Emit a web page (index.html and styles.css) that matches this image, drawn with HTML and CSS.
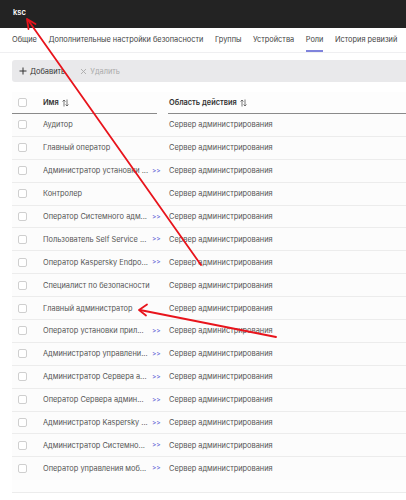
FILE: index.html
```html
<!DOCTYPE html>
<html lang="ru">
<head>
<meta charset="utf-8">
<title>ksc</title>
<link rel="stylesheet" href="styles.css">
</head>
<body>
<div class="page">
  <header class="topbar"><span class="logo">ksc</span></header>
  <nav class="tabs">
    <span class="tab">Общие</span>
    <span class="tab">Дополнительные настройки безопасности</span>
    <span class="tab">Группы</span>
    <span class="tab">Устройства</span>
    <span class="tab active">Роли</span>
    <span class="tab">История ревизий</span>
  </nav>
  <div class="toolbar">
    <button class="tbtn add"><svg class="ico" width="8" height="8" viewBox="0 0 8 8"><path d="M4 0.5V7.5M0.5 4H7.5" stroke="#333" stroke-width="1"/></svg>Добавить</button>
    <button class="tbtn del"><svg class="ico" width="7" height="7" viewBox="0 0 7 7"><path d="M1 1L6 6M6 1L1 6" stroke="#aaa" stroke-width="0.9"/></svg>Удалить</button>
  </div>
  <div class="table">
    <div class="thead">
      <div class="hcell first"><span class="cb"></span><span class="hname">Имя</span><svg class="sort" width="7" height="8" viewBox="0 0 7 8"><path d="M2 7.5V1M0.5 2.5L2 1L3.5 2.5M5 0.5V7M3.5 5.5L5 7L6.5 5.5" stroke="#555" stroke-width="0.8" fill="none"/></svg></div>
      <div class="hcell second"><span class="hname">Область действия</span><svg class="sort" width="7" height="8" viewBox="0 0 7 8"><path d="M2 7.5V1M0.5 2.5L2 1L3.5 2.5M5 0.5V7M3.5 5.5L5 7L6.5 5.5" stroke="#555" stroke-width="0.8" fill="none"/></svg></div>
    </div>
    <div class="row"><span class="cbcell"><span class="cb"></span></span><span class="name"><span class="ntext">Аудитор</span></span><span class="scope">Сервер администрирования</span></div>
    <div class="row"><span class="cbcell"><span class="cb"></span></span><span class="name"><span class="ntext">Главный оператор</span></span><span class="scope">Сервер администрирования</span></div>
    <div class="row"><span class="cbcell"><span class="cb"></span></span><span class="name"><span class="ntext">Администратор установки ...</span><span class="more">&gt;&gt;</span></span><span class="scope">Сервер администрирования</span></div>
    <div class="row"><span class="cbcell"><span class="cb"></span></span><span class="name"><span class="ntext">Контролер</span></span><span class="scope">Сервер администрирования</span></div>
    <div class="row"><span class="cbcell"><span class="cb"></span></span><span class="name"><span class="ntext">Оператор Системного адм...</span><span class="more">&gt;&gt;</span></span><span class="scope">Сервер администрирования</span></div>
    <div class="row"><span class="cbcell"><span class="cb"></span></span><span class="name"><span class="ntext">Пользователь Self Service ...</span><span class="more">&gt;&gt;</span></span><span class="scope">Сервер администрирования</span></div>
    <div class="row"><span class="cbcell"><span class="cb"></span></span><span class="name"><span class="ntext">Оператор Kaspersky Endpo...</span><span class="more">&gt;&gt;</span></span><span class="scope">Сервер администрирования</span></div>
    <div class="row"><span class="cbcell"><span class="cb"></span></span><span class="name"><span class="ntext">Специалист по безопасности</span></span><span class="scope">Сервер администрирования</span></div>
    <div class="row"><span class="cbcell"><span class="cb"></span></span><span class="name"><span class="ntext">Главный администратор</span></span><span class="scope">Сервер администрирования</span></div>
    <div class="row"><span class="cbcell"><span class="cb"></span></span><span class="name"><span class="ntext">Оператор установки прил...</span><span class="more">&gt;&gt;</span></span><span class="scope">Сервер администрирования</span></div>
    <div class="row"><span class="cbcell"><span class="cb"></span></span><span class="name"><span class="ntext">Администратор управлени...</span><span class="more">&gt;&gt;</span></span><span class="scope">Сервер администрирования</span></div>
    <div class="row"><span class="cbcell"><span class="cb"></span></span><span class="name"><span class="ntext">Администратор Сервера а...</span><span class="more">&gt;&gt;</span></span><span class="scope">Сервер администрирования</span></div>
    <div class="row"><span class="cbcell"><span class="cb"></span></span><span class="name"><span class="ntext">Оператор Сервера админ...</span><span class="more">&gt;&gt;</span></span><span class="scope">Сервер администрирования</span></div>
    <div class="row"><span class="cbcell"><span class="cb"></span></span><span class="name"><span class="ntext">Администратор Kaspersky ...</span><span class="more">&gt;&gt;</span></span><span class="scope">Сервер администрирования</span></div>
    <div class="row"><span class="cbcell"><span class="cb"></span></span><span class="name"><span class="ntext">Администратор Системно...</span><span class="more">&gt;&gt;</span></span><span class="scope">Сервер администрирования</span></div>
    <div class="row last"><span class="cbcell"><span class="cb"></span></span><span class="name"><span class="ntext">Оператор управления моб...</span><span class="more">&gt;&gt;</span></span><span class="scope">Сервер администрирования</span></div>
    <div class="tfoot"></div>
  </div>
  <svg class="annot" width="406" height="500" viewBox="0 0 406 500">
    <g stroke="#e8141c" stroke-width="1.8" fill="none" stroke-linecap="round">
      <path d="M201 265L28 20"/>
      <path d="M27 19L28.5 29M27 19L35.5 24"/>
      <path d="M276 337L140 310"/>
      <path d="M139 310L147 304.5M139 310L146 315.5"/>
    </g>
  </svg>
</div>
</body>
</html>
```
FILE: styles.css
```css
* { box-sizing: border-box; }
html, body { margin: 0; padding: 0; background: #fff; }
body {
  font-family: Inter, "Noto Sans", "DejaVu Sans", sans-serif;
  font-size: 7.4px;
  color: #555;
}
.page { position: relative; width: 406px; height: 500px; overflow: hidden; }
.topbar {
  height: 28px;
  background: #232323;
  display: flex;
  align-items: center;
  padding-left: 13px;
}
.logo { color: #fff; font-weight: 600; font-size: 7.6px; margin-top: -3px; }
.tabs {
  display: flex;
  gap: 11.5px;
  padding-left: 12px;
  height: 25px;
  border-bottom: 1px solid #efeff1;
  white-space: nowrap;
}
.tab {
  height: 24px;
  line-height: 24px;
  color: #444;
  border-bottom: 2px solid transparent;
}
.tab.active { border-bottom-color: #7f83dc; }
.toolbar {
  margin: 7px 0 0 12px;
  height: 22px;
  background: #e9e9eb;
  border-radius: 3px 0 0 3px;
  display: flex;
  align-items: center;
  padding-left: 7px;
  gap: 15px;
}
.tbtn {
  border: 0;
  background: none;
  padding: 0;
  font: inherit;
  display: flex;
  align-items: center;
  gap: 3px;
}
.tbtn.add { color: #333; }
.tbtn.del { color: #aaa; }
.table { margin: 10px 0 0 12px; background: #fdfdfd; }
.thead {
  display: grid;
  grid-template-columns: 145px 1fr;
  column-gap: 11px;
  height: 22px;
}
.hcell {
  display: flex;
  align-items: center;
  border-bottom: 1px solid #8a8a8a;
  color: #333;
  font-weight: 600;
}
.hcell.first .cb { margin: 0 16px 0 6px; }
.hname { margin-right: 3px; }
.hcell.second { padding-left: 1px; }
.sort { display: block; }
.cb {
  display: inline-block;
  width: 9px;
  height: 9px;
  border: 1px solid #cfcfcf;
  border-radius: 2px;
  background: #fff;
}
.row {
  display: grid;
  grid-template-columns: 31px 126px 1fr;
  height: 22.9px;
  align-items: center;
  border-bottom: 1px solid #ececec;
  background: #fcfcfc;
}
.row.last { border-bottom-color: transparent; }
.cbcell { display: flex; padding-left: 6px; }
.name {
  display: grid;
  grid-template-columns: 109px auto;
  align-items: center;
  white-space: nowrap;
}
.ntext {
  display: block;
  overflow: hidden;
  text-overflow: ellipsis;
}
.more {
  color: #5d64d6;
  font-size: 6.6px;
}
.scope { white-space: nowrap; }
.tfoot { height: 13px; border-bottom: 1px solid #ececec; }
.annot { position: absolute; left: 0; top: 0; pointer-events: none; }
```
